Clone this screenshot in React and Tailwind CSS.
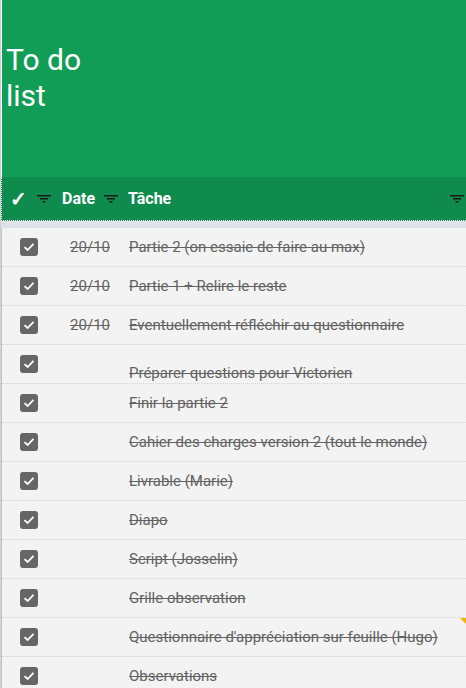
import React from 'react';

const TASKS = [
  { date: '20/10', text: 'Partie 2 (on essaie de faire au max)' },
  { date: '20/10', text: 'Partie 1 + Relire le reste' },
  { date: '20/10', text: 'Eventuellement réfléchir au questionnaire' },
  { date: '', text: 'Préparer questions pour Victorien', low: true },
  { date: '', text: 'Finir la partie 2' },
  { date: '', text: 'Cahier des charges version 2 (tout le monde)' },
  { date: '', text: 'Livrable (Marie)' },
  { date: '', text: 'Diapo' },
  { date: '', text: 'Script (Josselin)' },
  { date: '', text: 'Grille observation' },
  { date: '', text: "Questionnaire d'appréciation sur feuille (Hugo)", note: true },
  { date: '', text: 'Observations' },
];

function FilterIcon() {
  return (
    <svg width="14" height="8" viewBox="0 0 14 8" className="shrink-0">
      <rect x="0" y="0" width="14" height="1.5" fill="#1a1a1a" />
      <rect x="3" y="3" width="8" height="1.5" fill="#1a1a1a" />
      <rect x="5.5" y="6" width="3" height="1.5" fill="#1a1a1a" />
    </svg>
  );
}

function Checkbox() {
  return (
    <div className="w-[18px] h-[18px] rounded-[3px] bg-[#666666] flex items-center justify-center shrink-0">
      <svg width="12" height="10" viewBox="0 0 12 10">
        <path d="M1.5 5.2 L4.6 8 L10.5 1.8" fill="none" stroke="#ffffff" strokeWidth="1.8" />
      </svg>
    </div>
  );
}

export default function App() {
  return (
    <div className="w-[466px] h-[688px] overflow-hidden border-l border-[#d0d0d0] bg-[#f3f3f3]" style={{ fontFamily: 'Roboto, "Liberation Sans", sans-serif' }}>
      {/* banner */}
      <div className="h-[177px] bg-[#129d57] border-l border-white pt-[42px] pl-[4px]">
        <h1 className="text-[30px] leading-[36px] text-white font-normal">To do<br />list</h1>
      </div>

      {/* column header */}
      <div className="h-[44px] bg-[#0f8c4d] border-l border-white border-b border-dotted border-b-white flex items-center text-white">
        <span className="ml-[8px] w-[14px] text-[20px] font-bold leading-none">✓</span>
        <span className="ml-[13px]"><FilterIcon /></span>
        <span className="ml-[11px] text-[16px] font-bold">Date</span>
        <span className="ml-[9px]"><FilterIcon /></span>
        <span className="ml-[10px] text-[16px] font-bold">Tâche</span>
        <span className="ml-auto mr-[2px]"><FilterIcon /></span>
      </div>
      <div className="h-[7px] bg-[#dfe3e8]" />

      {/* rows */}
      <div className="border-l border-[#b9ccbb]">
        {TASKS.map((t, i) => (
          <div key={i} className="relative h-[39px] border-b border-dotted border-[#d4d4d4] flex items-center text-[15px] text-[#626262]">
            <div className="ml-[18px]"><Checkbox /></div>
            <div className="w-[72px] text-right line-through">{t.date}</div>
            <div className={`ml-[19px] line-through whitespace-nowrap ${t.low ? 'pt-[19px]' : ''}`}>{t.text}</div>
            {t.note && (
              <div className="absolute right-0 top-0 w-0 h-0 border-t-[6px] border-t-[#f4b400] border-l-[6px] border-l-transparent" />
            )}
          </div>
        ))}
      </div>
    </div>
  );
}
